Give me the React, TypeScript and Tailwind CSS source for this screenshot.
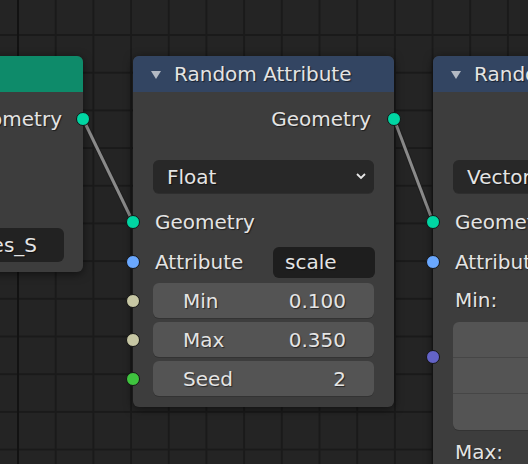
import type { ReactNode } from "react";

function Socket({ color, side, className = "" }: { color: string; side: "left" | "right"; className?: string }) {
  return (
    <span
      className={`absolute top-1/2 -translate-y-1/2 w-[14px] h-[14px] rounded-full border border-[#151515] ${
        side === "left" ? "left-[-7px]" : "right-[-7px]"
      } ${color} ${className}`}
    />
  );
}

function Collapse() {
  return (
    <svg width="10" height="9" viewBox="0 0 10 9" className="shrink-0">
      <polygon points="0,1 10,1 5,9" fill="#b3b9c3" />
    </svg>
  );
}

function Chevron() {
  return (
    <svg width="10" height="7" viewBox="0 0 10 7">
      <polyline points="1,1 5,5 9,1" fill="none" stroke="#e8e8e8" strokeWidth="1.8" />
    </svg>
  );
}

function Header({ color, title }: { color: string; title?: string }) {
  return (
    <div className={`h-[36px] shrink-0 rounded-t-[6px] flex items-center pl-[18px] gap-[13px] ${color}`}>
      {title && <Collapse />}
      {title && <span className="whitespace-nowrap">{title}</span>}
    </div>
  );
}

function Dropdown({ label }: { label: string }) {
  return (
    <div className="mx-[20px] mt-[21px] h-[33px] rounded-[6px] bg-[#282828] flex items-center justify-between pl-[14px] pr-[8px] shadow-[0_1px_0_#2e2e2e]">
      <span>{label}</span>
      <Chevron />
    </div>
  );
}

function Row({ children, className = "" }: { children?: ReactNode; className?: string }) {
  return <div className={`relative flex items-center h-[40px] ${className}`}>{children}</div>;
}

function Slider({ label, value, socket }: { label: string; value: string; socket: string }) {
  return (
    <div className="relative h-[35px] px-[20px]">
      <Socket color={socket} side="left" />
      <div className="h-full rounded-[6px] bg-[#545454] shadow-[0_1px_0_#333] flex items-center justify-between pl-[30px] pr-[28px]">
        <span>{label}</span>
        <span>{value}</span>
      </div>
    </div>
  );
}

export default function App() {
  return (
    <div className="relative w-[528px] h-[464px] overflow-hidden bg-[#242424] bg-[linear-gradient(to_right,#1a1a1a_2px,transparent_2px),linear-gradient(to_bottom,#1a1a1a_2px,transparent_2px)] bg-[size:37.7px_37.7px] bg-[position:17px_34px] font-['DejaVu_Sans',sans-serif] text-[20px] text-[#e4e4e4] [text-shadow:1px_1px_1px_rgba(0,0,0,0.55)]">
      {/* major grid line */}
      <div className="absolute left-[17px] top-0 bottom-0 w-[2px] bg-[#121212]" />

      {/* links */}
      <svg className="absolute inset-0" width="528" height="464">
        <line x1="83" y1="119" x2="133" y2="222" stroke="#1e1e1e" strokeWidth="5" />
        <line x1="83" y1="119" x2="133" y2="222" stroke="#8a8a8a" strokeWidth="3" />
        <line x1="394" y1="119" x2="433" y2="222" stroke="#1e1e1e" strokeWidth="5" />
        <line x1="394" y1="119" x2="433" y2="222" stroke="#8a8a8a" strokeWidth="3" />
      </svg>

      {/* left node (mostly off screen) */}
      <div className="absolute left-[-117px] top-[56px] w-[200px] h-[216px] rounded-[6px] bg-[#3d3d3d] shadow-[0_2px_10px_rgba(0,0,0,0.55)] flex flex-col">
        <Header color="bg-[#0e8b6a]" />
        <div className="flex flex-col pt-[7px]">
          <Row className="justify-end pr-[21px]">
            <span>Geometry</span>
            <Socket color="bg-[#00d6a3]" side="right" />
          </Row>
          <div className="ml-[20px] mr-[19px] mt-[89px] h-[34px] rounded-[6px] bg-[#222222] flex items-center justify-end pr-[27px]">
            <span>es_S</span>
          </div>
        </div>
      </div>

      {/* middle node */}
      <div className="absolute left-[133px] top-[56px] w-[261px] h-[351px] rounded-[6px] bg-[#3d3d3d] shadow-[0_2px_10px_rgba(0,0,0,0.55)] flex flex-col">
        <Header color="bg-[#334562]" title="Random Attribute" />
        <div className="flex flex-col pt-[7px]">
          <Row className="justify-end pr-[23px]">
            <span>Geometry</span>
            <Socket color="bg-[#00d6a3]" side="right" />
          </Row>
          <Dropdown label="Float" />
          <Row className="mt-[9px] pl-[22px]">
            <Socket color="bg-[#00d6a3]" side="left" />
            <span>Geometry</span>
          </Row>
          <Row className="pl-[22px] pr-[19px] justify-between">
            <Socket color="bg-[#6aa8ff]" side="left" />
            <span>Attribute</span>
            <div className="w-[102px] h-[31px] rounded-[6px] bg-[#1e1e1e] flex items-center pl-[12px]">scale</div>
          </Row>
          <div className="mt-[1px] flex flex-col gap-[4px]">
            <Slider label="Min" value="0.100" socket="bg-[#c7c7a4]" />
            <Slider label="Max" value="0.350" socket="bg-[#c7c7a4]" />
            <Slider label="Seed" value="2" socket="bg-[#3fc43f]" />
          </div>
        </div>
      </div>

      {/* right node (partly off screen) */}
      <div className="absolute left-[433px] top-[56px] w-[261px] h-[460px] rounded-[6px] bg-[#3d3d3d] shadow-[0_2px_10px_rgba(0,0,0,0.55)] flex flex-col">
        <Header color="bg-[#334562]" title="Random Attribute" />
        <div className="flex flex-col pt-[7px]">
          <Row />
          <Dropdown label="Vector" />
          <Row className="mt-[9px] pl-[22px]">
            <Socket color="bg-[#00d6a3]" side="left" />
            <span>Geometry</span>
          </Row>
          <Row className="pl-[22px]">
            <Socket color="bg-[#6aa8ff]" side="left" />
            <span>Attribute</span>
          </Row>
          <div className="h-[36px] flex items-center pl-[22px]">Min:</div>
          <div className="relative mt-[4px] px-[20px]">
            <span className="absolute left-[-7px] top-[28px] w-[14px] h-[14px] rounded-full border border-[#151515] bg-[#6363c7]" />
            <div className="rounded-[6px] bg-[#545454] flex flex-col divide-y divide-[#464646] shadow-[0_1px_0_#333]">
              <div className="h-[36px]" />
              <div className="h-[36px]" />
              <div className="h-[36px]" />
            </div>
          </div>
          <div className="mt-[2px] h-[40px] flex items-center pl-[22px]">Max:</div>
        </div>
      </div>
    </div>
  );
}
